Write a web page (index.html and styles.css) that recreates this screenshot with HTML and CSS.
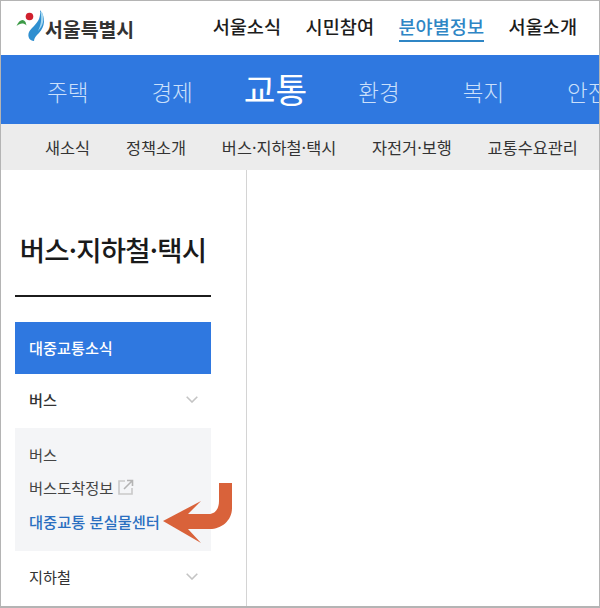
FILE: index.html
```html
<!DOCTYPE html>
<html lang="ko">
<head>
<meta charset="utf-8">
<title>서울특별시 교통</title>
<link rel="stylesheet" href="styles.css">
</head>
<body>
<div class="frame">
  <header class="top">
    <a class="logo">
      <svg class="logo-mark" width="32" height="32" viewBox="0 0 32 32" aria-hidden="true">
        <circle cx="14.5" cy="6.5" r="3.8" fill="#d0202e"/>
        <path d="M1.5 16C4 10 8 8 10.5 12L11.5 15.5C8.5 12.5 5 13 1.5 16Z" fill="#3c9a46"/>
        <path d="M25 0C31 7 30 17 24 23C21 26 19 28 19 31C15 31 12 27 14 22C16 18 22 14 24 9C25 6 25.5 3 25 0Z" fill="#2f8fd0"/>
        <path d="M27 2C30 9 28 16 23 21C26 15 27 9 25.5 2Z" fill="#a6d8f0"/>
      </svg>
      <span class="logo-text">서울특별시</span>
    </a>
    <nav class="gnb">
      <a class="gnb-item">서울소식</a>
      <a class="gnb-item">시민참여</a>
      <a class="gnb-item gnb-on">분야별정보</a>
      <a class="gnb-item">서울소개</a>
    </nav>
  </header>
  <nav class="cats">
    <a class="cat">주택</a>
    <a class="cat">경제</a>
    <a class="cat cat-on">교통</a>
    <a class="cat">환경</a>
    <a class="cat">복지</a>
    <a class="cat">안전</a>
  </nav>
  <nav class="subs">
    <a class="sub">새소식</a>
    <a class="sub">정책소개</a>
    <a class="sub">버스·지하철·택시</a>
    <a class="sub">자전거·보행</a>
    <a class="sub">교통수요관리</a>
  </nav>
  <div class="body">
    <aside class="side">
      <h1 class="side-title">버스·지하철·택시</h1>
      <a class="side-active">대중교통소식</a>
      <a class="side-row side-row-strong">버스
        <svg class="chev" width="12" height="7" viewBox="0 0 12 7" aria-hidden="true"><path d="M0.7 0.8L6 6L11.3 0.8" fill="none" stroke="#c4c4c4" stroke-width="1.6"/></svg>
      </a>
      <div class="side-group">
        <a class="side-link">버스</a>
        <a class="side-link">버스도착정보
          <svg class="ext" width="16" height="16" viewBox="0 0 16 16" aria-hidden="true">
            <path d="M7 2H1V15H14V9" fill="none" stroke="#c9c9c9" stroke-width="1.6"/>
            <path d="M6 10L14 2M9 1.5H14.5V7" fill="none" stroke="#b4b4b4" stroke-width="1.6"/>
          </svg>
        </a>
        <a class="side-link side-link-on">대중교통 분실물센터
          <svg class="arrow" width="69" height="60" viewBox="0 0 69 60" aria-hidden="true">
            <path d="M0 38L38 18L25 31H46C52 31 56 26 56 18V0H69V25C69 38 58 46 47 46H25L38 60Z" fill="#d9623a"/>
          </svg>
        </a>
      </div>
      <a class="side-row">지하철
        <svg class="chev" width="12" height="7" viewBox="0 0 12 7" aria-hidden="true"><path d="M0.7 0.8L6 6L11.3 0.8" fill="none" stroke="#c4c4c4" stroke-width="1.6"/></svg>
      </a>
    </aside>
    <main class="content"></main>
  </div>
</div>
</body>
</html>
```

FILE: styles.css
```css
* { box-sizing: border-box; }
html, body { margin: 0; padding: 0; }
body {
  background: #fff;
  color: #222;
  font-family: "Noto Sans CJK KR", "Noto Sans", sans-serif;
}
a { color: inherit; text-decoration: none; }
.frame {
  width: 600px;
  height: 608px;
  border: 1px solid #b4b4b4;
  border-bottom-width: 2px;
  overflow: hidden;
  display: flex;
  flex-direction: column;
}
.top {
  height: 54px;
  flex: none;
  display: flex;
  align-items: center;
  justify-content: space-between;
  padding-right: 22px;
}
.logo { display: flex; align-items: center; margin-left: 14px; }
.logo-mark { margin-top: -4px; }
.logo-text {
  font-size: 19.4px;
  font-weight: 700;
  color: #333;
  line-height: 1;
  margin-left: -2px;
  margin-top: 2px;
}
.gnb { display: flex; gap: 24.5px; align-items: center; }
.gnb-item {
  font-size: 18.6px;
  font-weight: 500;
  line-height: 24px;
  color: #1d1d1d;
  padding-bottom: 2px;
  border-bottom: 2px solid transparent;
}
.gnb-on { color: #2f86c5; border-bottom-color: #2f86c5; }
.cats {
  height: 69px;
  flex: none;
  background: #2f78e0;
  display: flex;
  align-items: center;
  gap: 63px;
  padding: 2px 0 0 46px;
  overflow: hidden;
  white-space: nowrap;
}
.cat { font-size: 22.5px; font-weight: 300; color: #cbe0fb; flex: none; line-height: 30px; }
.cat-on {
  font-size: 34.5px;
  font-weight: 400;
  color: #fff;
  line-height: 40px;
  margin: -6px -12px 0 -12px;
}
.subs {
  height: 46px;
  flex: none;
  background: #ececec;
  display: flex;
  align-items: center;
  gap: 35.8px;
  padding: 0 0 1px 44px;
  white-space: nowrap;
}
.sub { font-size: 16.35px; color: #333; line-height: 22px; }
.body { flex: 1; display: flex; min-height: 0; }
.side {
  width: 246px;
  flex: none;
  border-right: 1px solid #d4d4d4;
  padding: 0 35px 0 14px;
  display: flex;
  flex-direction: column;
}
.side-title {
  margin: 0 0 25px;
  height: 127px;
  padding-top: 61px;
  border-bottom: 2px solid #1c1c1c;
  font-size: 27.5px;
  font-weight: 500;
  line-height: 36px;
  letter-spacing: -0.8px;
  text-align: center;
  white-space: nowrap;
  color: #1a1a1a;
}
.side-active {
  height: 52px;
  background: #2f78e0;
  color: #fff;
  font-size: 15.2px;
  font-weight: 500;
  display: flex;
  align-items: center;
  padding: 0 0 3px 14px;
}
.side-row {
  height: 54px;
  display: flex;
  align-items: center;
  justify-content: space-between;
  padding: 0 13px 4px 14px;
  font-size: 15.2px;
  color: #333;
}
.side-row-strong { font-weight: 500; }
.chev { flex: none; }
.side-group {
  background: #f4f5f7;
  height: 123px;
  padding: 9px 14px 0;
  display: flex;
  flex-direction: column;
}
.side-link {
  height: 33.5px;
  display: flex;
  align-items: center;
  gap: 5px;
  font-size: 15.3px;
  color: #444;
  white-space: nowrap;
  position: relative;
}
.side-link-on { color: #2a6fc0; font-weight: 500; }
.ext { flex: none; }
.arrow { position: absolute; left: 134px; top: -21px; }
.content { flex: 1; }
```
